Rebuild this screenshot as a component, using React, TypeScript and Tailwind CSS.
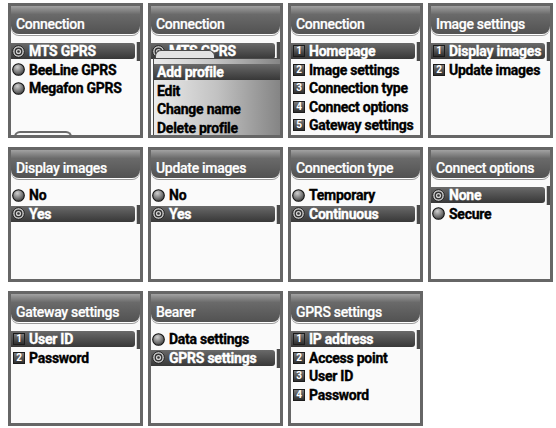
import React, { useId } from "react";

type Item = { label: string; selected?: boolean; checked?: boolean };
type PanelProps = {
  title: string;
  kind: "radio" | "num";
  items: Item[];
  bottomTab?: boolean;
  popup?: Item[];
};

const FONT = { fontFamily: "Roboto, 'Liberation Sans', sans-serif" };

function Radio({ checked }: { checked?: boolean }) {
  const id = useId();
  if (checked) {
    return (
      <svg width="13" height="13" viewBox="0 0 13 13" className="shrink-0">
        <circle cx="6.5" cy="6.5" r="5.8" fill="#d4d4d4" stroke="#1e1e1e" strokeWidth="1" />
        <circle cx="6.5" cy="6.5" r="3.3" fill="none" stroke="#333" strokeWidth="1.4" />
        <circle cx="6.5" cy="6.5" r="1.3" fill="#333" />
      </svg>
    );
  }
  return (
    <svg width="13" height="13" viewBox="0 0 13 13" className="shrink-0">
      <defs>
        <radialGradient id={id} cx="0.4" cy="0.3" r="0.75">
          <stop offset="0" stopColor="#d0d0d0" />
          <stop offset="0.55" stopColor="#7e7e7e" />
          <stop offset="1" stopColor="#3a3a3a" />
        </radialGradient>
      </defs>
      <circle cx="6.5" cy="6.5" r="5.8" fill={`url(#${id})`} stroke="#111" strokeWidth="1.1" />
    </svg>
  );
}

function Badge({ n }: { n: number }) {
  return (
    <div className="w-[12px] h-[12px] shrink-0 flex items-center justify-center bg-linear-to-b from-[#7a7a7a] to-[#2e2e2e] border border-[#1c1c1c] text-white text-[10px] font-bold leading-none">
      {n}
    </div>
  );
}

const TXT = "text-[14px] font-bold tracking-[-0.25px] leading-none whitespace-nowrap [-webkit-text-stroke:0.35px_currentColor]";

function Row({ item, kind, idx }: { item: Item; kind: "radio" | "num"; idx: number }) {
  const sel = item.selected;
  return (
    <div className="h-[18.5px] flex items-center">
      <div
        className={
          "h-[16px] w-full flex items-center rounded-r-[3px] " +
          (sel ? "bg-linear-to-b from-[#6a6a6a] to-[#383838] text-white" : "text-black")
        }
      >
        {kind === "radio" ? (
          <div className="ml-[1px] w-[17px] flex">
            <Radio checked={item.checked} />
          </div>
        ) : (
          <div className="ml-[2px] w-[16px] flex">
            <Badge n={idx + 1} />
          </div>
        )}
        <span className={TXT}>{item.label}</span>
      </div>
    </div>
  );
}

function Panel({ title, kind, items, bottomTab, popup }: PanelProps) {
  const selIdx = items.findIndex((i) => i.selected);
  return (
    <div className="relative h-[135px] border-[3px] border-[#666666] bg-[#fafafa] overflow-hidden" style={FONT}>
      <div className="h-[28px] rounded-b-[8px] bg-linear-to-b from-[#a2a2a2] via-[#6a6a6a] via-30% to-[#525252] flex items-center pl-[5px] pt-[7px] shadow-[0_1px_0_#ffffff,0_2px_0_#9a9a9a]">
        <span className="text-white text-[14px] font-medium tracking-[-0.3px] leading-none whitespace-nowrap [-webkit-text-stroke:0.2px_currentColor]">{title}</span>
      </div>
      <div className="mt-[8px] pr-[5px]">
        {items.map((it, i) => (
          <Row key={i} item={it} kind={kind} idx={i} />
        ))}
      </div>
      {selIdx >= 0 && (
        <div
          className="absolute right-0 w-[4px] h-[19px] bg-[#4a4a4a] border-l border-[#cfcfcf] rounded-l-[1px]"
          style={{ top: 36 + selIdx * 18.5 }}
        />
      )}
      {bottomTab && (
        <div className="absolute bottom-[-2px] left-[3px] w-[58px] h-[6px] border-t-2 border-x-2 border-[#6a6a6a] rounded-t-[8px]" />
      )}
      {popup && (
        <div className="absolute left-[2px] right-0 top-[44px] bottom-0">
          <div className="absolute left-[2px] top-0 w-[60px] h-[10px] rounded-t-[6px] border-t border-x border-[#4a4a4a] bg-[#e4e4e4]" />
          <div className="absolute left-0 right-0 top-[8px] bottom-0 border-t border-l border-[#4a4a4a] bg-linear-to-r from-[#ececec] via-[#c2c2c2] to-[#858585] pt-[4px]">
            {popup.map((p, i) => (
              <div key={i} className="h-[18.5px] flex items-center">
                <div
                  className={
                    "h-[16px] w-full flex items-center pl-[3px] " +
                    (p.selected ? "bg-linear-to-b from-[#6a6a6a] to-[#383838] text-white" : "text-black")
                  }
                >
                  <span className={TXT}>{p.label}</span>
                </div>
              </div>
            ))}
          </div>
        </div>
      )}
    </div>
  );
}

const panels: PanelProps[] = [
  {
    title: "Connection",
    kind: "radio",
    bottomTab: true,
    items: [
      { label: "MTS GPRS", selected: true, checked: true },
      { label: "BeeLine GPRS" },
      { label: "Megafon GPRS" },
    ],
  },
  {
    title: "Connection",
    kind: "radio",
    items: [{ label: "MTS GPRS", selected: true, checked: true }],
    popup: [
      { label: "Add profile", selected: true },
      { label: "Edit" },
      { label: "Change name" },
      { label: "Delete profile" },
    ],
  },
  {
    title: "Connection",
    kind: "num",
    items: [
      { label: "Homepage", selected: true },
      { label: "Image settings" },
      { label: "Connection type" },
      { label: "Connect options" },
      { label: "Gateway settings" },
    ],
  },
  {
    title: "Image settings",
    kind: "num",
    items: [{ label: "Display images", selected: true }, { label: "Update images" }],
  },
  {
    title: "Display images",
    kind: "radio",
    items: [{ label: "No" }, { label: "Yes", selected: true, checked: true }],
  },
  {
    title: "Update images",
    kind: "radio",
    items: [{ label: "No" }, { label: "Yes", selected: true, checked: true }],
  },
  {
    title: "Connection type",
    kind: "radio",
    items: [{ label: "Temporary" }, { label: "Continuous", selected: true, checked: true }],
  },
  {
    title: "Connect options",
    kind: "radio",
    items: [{ label: "None", selected: true, checked: true }, { label: "Secure" }],
  },
  {
    title: "Gateway settings",
    kind: "num",
    items: [{ label: "User ID", selected: true }, { label: "Password" }],
  },
  {
    title: "Bearer",
    kind: "radio",
    items: [{ label: "Data settings" }, { label: "GPRS settings", selected: true, checked: true }],
  },
  {
    title: "GPRS settings",
    kind: "num",
    items: [
      { label: "IP address", selected: true },
      { label: "Access point" },
      { label: "User ID" },
      { label: "Password" },
    ],
  },
];

export default function App() {
  return (
    <div className="w-[556px] h-[428px] bg-white overflow-hidden">
      <div className="grid grid-cols-[135px_135px_135px_125px] gap-x-[5px] gap-y-[9px] pl-[8px] pt-[3px]">
        {panels.map((p, i) => (
          <Panel key={i} {...p} />
        ))}
      </div>
    </div>
  );
}
